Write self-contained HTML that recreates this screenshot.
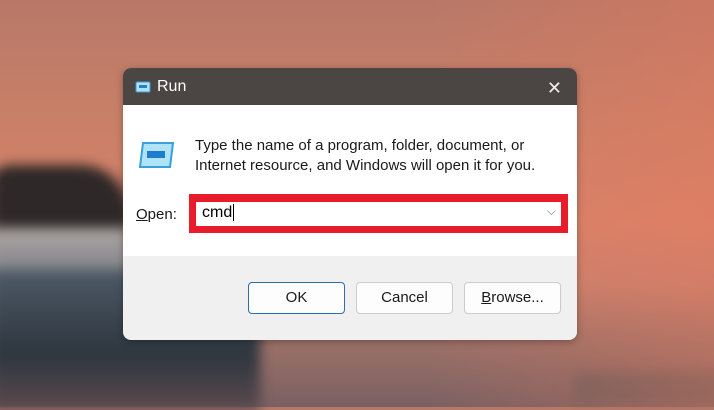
<!DOCTYPE html><html><head><style>
body{margin:0;width:714px;height:407px;overflow:hidden;position:relative;font-family:"Liberation Sans",sans-serif;
background:linear-gradient(180deg,#b87868 0%,#c98068 30%,#d7826a 55%,#c6806e 70%,#9a7068 85%,#7a6062 100%);}
.bg2{position:absolute;inset:0;background:linear-gradient(90deg,rgba(0,0,0,0) 60%,rgba(235,120,90,.35) 100%)}
.blur{position:absolute;inset:0;filter:blur(6px)}
.tree{position:absolute;left:-10px;top:165px;width:140px;height:65px;background:#2e2828;border-radius:20px 50px 0 0}
.snow{position:absolute;left:-10px;top:228px;width:140px;height:45px;background:linear-gradient(180deg,#b0a8a6,#7e8088)}
.water{position:absolute;left:-10px;top:270px;width:270px;height:140px;background:linear-gradient(180deg,#4d5a66,#2e3640 60%,#5a4a4e)}
.shore{position:absolute;right:-10px;top:372px;width:150px;height:30px;background:#5a5a58;opacity:.5}
.dlg{position:absolute;left:123px;top:68px;width:454px;height:272px;border-radius:8px;overflow:hidden;background:#f0f0f0;box-shadow:0 2px 8px rgba(0,0,0,.3)}
.tb{height:37px;background:#4b4644;color:#fff;font-size:16px;position:relative}
.tb span{position:absolute;left:34px;top:10px}
.x{position:absolute;right:15px;top:10px;color:#eee;font-size:18px}
.body{position:absolute;top:37px;left:0;right:0;height:151px;background:#fff}
.txt{position:absolute;left:72px;top:31px;font-size:15px;line-height:20px;color:#1a1a1a}
.lbl{position:absolute;left:13px;top:101px;font-size:15px;color:#1a1a1a}
.red{position:absolute;left:66px;top:89px;width:379px;height:39px;background:#e81c2a}
.inp{position:absolute;left:7px;top:8px;right:7px;bottom:7px;background:#fff;font-size:16px;padding:2px 6px;box-sizing:border-box}
.btn{position:absolute;top:214px;width:97px;height:32px;border:1px solid #ccc;border-radius:4px;background:#fdfdfd;box-sizing:border-box;text-align:center;line-height:30px;font-size:15px;color:#1a1a1a}
</style></head><body>
<div class="blur"><div class="tree"></div><div class="snow"></div><div class="water"></div><div class="shore"></div></div><div class="bg2"></div>
<div class="dlg">
<div class="tb"><svg style="position:absolute;left:12px;top:13px" width="16" height="12"><rect x="1" y="1" width="14" height="10" rx="1" fill="#aee0f6" stroke="#3a9ad6"/><rect x="4" y="4" width="8" height="3" fill="#2a7fc4"/></svg><span>Run</span><span class="x" style="left:auto">✕</span></div>
<div class="body">
<svg style="position:absolute;left:15px;top:36px" width="38" height="28" viewBox="0 0 38 28"><path d="M5 2h30l-3 24H2z" fill="#aee3f8" stroke="#3aa0dc" stroke-width="2"/><rect x="9" y="10" width="18" height="7" fill="#1e7ccc"/></svg>
<div class="txt">Type the name of a program, folder, document, or<br>Internet resource, and Windows will open it for you.</div>
<div class="lbl"><u>O</u>pen:</div>
<div class="red"><div class="inp">cmd<span style="border-left:1px solid #000;margin-left:1px"></span><span style="position:absolute;right:5px;top:2px;color:#777;font-size:12px">⌵</span></div></div>
</div>
<div class="btn" style="left:125px;border:1px solid #2d6ea8">OK</div>
<div class="btn" style="left:233px">Cancel</div>
<div class="btn" style="left:341px"><u>B</u>rowse...</div>
</div>
</body></html>
